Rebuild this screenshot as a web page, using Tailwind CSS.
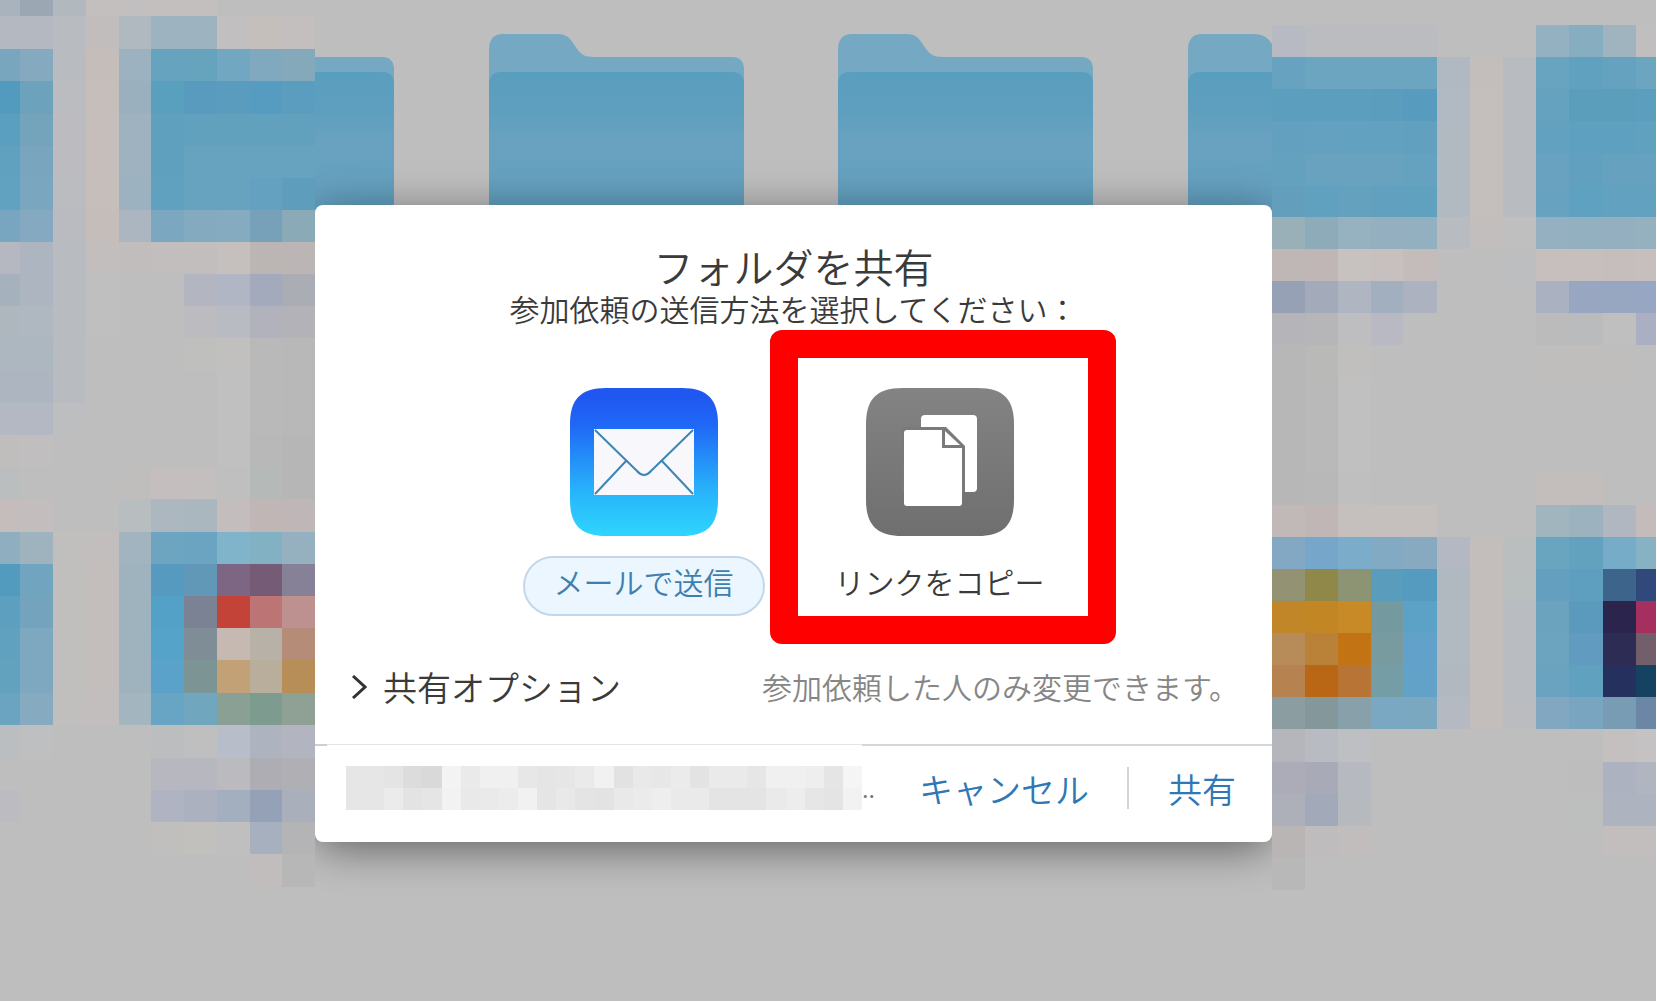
<!DOCTYPE html>
<html lang="ja">
  <head>
    <meta charset="UTF-8" />
    <meta name="viewport" content="width=device-width, initial-scale=1.0" />
    <title>フォルダを共有</title>
    <script src="https://cdn.jsdelivr.net/npm/@tailwindcss/browser@4"></script>
  </head>
  <body class="bg-white font-['Noto_Sans_CJK_JP',sans-serif] font-[350] text-[#3a3a3a]">
    <main
      class="grid min-h-screen grid-cols-[315fr_957fr_384fr] grid-rows-1 overflow-hidden border-r border-b border-white bg-[#bebebe]"
    >
      <!-- pixelated desktop, left -->
      <div class="relative z-10">
        <svg
          id="mosaicLeft"
          class="absolute inset-0 size-full"
          viewBox="0 0 315 1001"
          preserveAspectRatio="none"
          shape-rendering="crispEdges"
          aria-hidden="true"
        ></svg>
      </div>

      <div class="relative">
        <!-- folders behind the dialog -->
        <svg
          class="absolute inset-0 size-full"
          viewBox="0 0 957 1001"
          preserveAspectRatio="none"
          aria-hidden="true"
        >
          <defs>
            <linearGradient id="front" x1="0" y1="0" x2="0" y2="1">
              <stop offset="0" stop-color="#5a9ebe" />
              <stop offset="0.3" stop-color="#5f9fbe" />
              <stop offset="0.5" stop-color="#69a2c0" />
              <stop offset="1" stop-color="#64a1c0" />
            </linearGradient>
            <g id="folder">
              <path
                d="M0 210V50Q0 34 14 34H68C78 34 81 38 86 46C91 54 95 57 105 57H243Q255 57 255 70V210Z"
                fill="#74a8c3"
              />
              <path
                d="M0 210V84Q0 72 12 72H243Q255 72 255 84V210Z"
                fill="url(#front)"
              />
            </g>
          </defs>
          <use href="#folder" x="-176" />
          <use href="#folder" x="174" />
          <use href="#folder" x="523" />
          <use href="#folder" x="873" />
          <path d="M940 33H958V46Q952 34 940 34Z" fill="#bebebe" />
        </svg>

        <section
          role="dialog"
          aria-labelledby="title"
          class="relative mt-[205px] rounded-lg bg-white pt-[38px] shadow-[0_16px_40px_-8px_rgba(0,0,0,0.3),0_0_40px_rgba(0,0,0,0.25)]"
        >
          <h1 id="title" class="text-center text-[40px] leading-[46px]">フォルダを共有</h1>
          <p class="text-center text-[30px] leading-[38px]">
            参加依頼の送信方法を選択してください：
          </p>

          <div class="mt-[61px] flex justify-center pr-1 text-[30px]">
            <button type="button" class="flex w-[296px] flex-col items-center gap-5">
              <svg class="size-[148px]" viewBox="0 0 148 148" aria-hidden="true">
                <defs>
                  <linearGradient id="mail" x1="0" y1="0" x2="0" y2="1">
                    <stop offset="0.05" stop-color="#1f57f0" />
                    <stop offset="0.25" stop-color="#1f68f6" />
                    <stop offset="0.7" stop-color="#28b4fb" />
                    <stop offset="1" stop-color="#2ed5fe" />
                  </linearGradient>
                </defs>
                <path
                  d="M36 0H112C138 0 148 12 148 36V112C148 136 138 148 112 148H36C10 148 0 136 0 112V36C0 12 10 0 36 0Z"
                  fill="url(#mail)"
                />
                <path d="M24 41H124V107H24Z" fill="#f8f8fc" />
                <path
                  d="M25 42L67 83Q74 91 81 83L123 42M25 106L56 73M123 106L92 73"
                  fill="none"
                  stroke="#3c86b5"
                  stroke-width="2"
                />
              </svg>
              <span
                class="flex h-[60px] w-[242px] justify-center rounded-full border-2 border-[#c2d8ea] bg-[#ebf6fe] leading-[46px] text-[#3f7fb0]"
                >メールで送信</span
              >
            </button>

            <button type="button" class="relative flex w-[296px] flex-col items-center gap-5">
              <svg class="size-[148px]" viewBox="0 0 148 148" aria-hidden="true">
                <defs>
                  <linearGradient id="copy" x1="0" y1="0" x2="0" y2="1">
                    <stop offset="0" stop-color="#838383" />
                    <stop offset="1" stop-color="#6f6f6f" />
                  </linearGradient>
                </defs>
                <path
                  d="M36 0H112C138 0 148 12 148 36V112C148 136 138 148 112 148H36C10 148 0 136 0 112V36C0 12 10 0 36 0Z"
                  fill="url(#copy)"
                />
                <rect x="55" y="27" width="56" height="77" rx="4" fill="#fff" />
                <path d="M36 39H80L99 58V104H36Z" fill="#7a7a7a" />
                <path
                  d="M41 42H76V60H96V115Q96 118 93 118H41Q38 118 38 115V45Q38 42 41 42Z"
                  fill="#fff"
                />
                <path d="M79 43L94 57H79Z" fill="#fff" />
              </svg>
              <span class="h-[60px] leading-[50px]">リンクをコピー</span>
              <span
                class="pointer-events-none absolute -top-[58px] -right-7 -bottom-7 -left-[22px] rounded-xl border-[28px] border-[#fe0000]"
              ></span>
            </button>
          </div>

          <div class="mt-[46px] mb-[33px] flex h-[49px] items-center justify-between pr-[33px] pl-9">
            <button type="button" class="flex items-center gap-4 text-[34px]">
              <svg class="h-6 w-4" viewBox="0 0 16 24" fill="none" aria-hidden="true">
                <path d="M2 1L14 12L2 23" stroke="#333" stroke-width="3" />
              </svg>
              共有オプション
            </button>
            <p class="text-[30px] text-[#868686]">参加依頼した人のみ変更できます。</p>
          </div>

          <footer class="text-[34px] text-[#2f77b5]">
            <div class="flex h-0.5">
              <span class="w-3 bg-[#cfcfcf]"></span>
              <span class="h-px w-[535px] bg-[#e4e4e4]"></span>
              <span class="flex-1 bg-[#d6d6d6]"></span>
            </div>
            <div class="flex h-24 items-center pr-9 pb-3 pl-[31px]">
              <svg
                id="mosaicName"
                class="h-11 w-[516px]"
                viewBox="0 0 513 44"
                preserveAspectRatio="none"
                shape-rendering="crispEdges"
                aria-hidden="true"
              ></svg>
              <span class="text-[24px] text-[#777]">..</span>
              <button type="button" class="ml-auto">キャンセル</button>
              <span class="mr-[39px] ml-[38px] h-[42px] w-0.5 bg-[#d4d4d4]"></span>
              <button type="button">共有</button>
            </div>
          </footer>
        </section>
      </div>

      <!-- pixelated desktop, right -->
      <div class="relative z-10">
        <svg
          id="mosaicRight"
          class="absolute inset-0 size-full"
          viewBox="0 0 384 1001"
          preserveAspectRatio="none"
          shape-rendering="crispEdges"
          aria-hidden="true"
        ></svg>
      </div>
    </main>

    <script>
      // Each row: "top bottom colours..."
      function paint(id, cols, rows) {
        let out = "";
        rows.forEach((row) => {
          const [top, bottom, ...cells] = row.split(" ");
          cells.forEach((c, i) => {
            out += `<rect x="${cols[i]}" y="${top}" width="${cols[i + 1] - cols[i]}" height="${bottom - top}" fill="#${c}"/>`;
          });
        });
        document.getElementById(id).innerHTML = out;
      }

      paint("mosaicLeft", [0, 20, 53, 86, 119, 151, 184, 217, 250, 282, 315], [
        "0 1001 bebebe bebebe bebebe bebebe bebebe bebebe bebebe bebebe bebebe bebebe",
        "0 16 a9b3bd 9ba8b4 b2b9be c2bfbe c1bfbf c3bfbe c3bfbe bebebe bebebe bebebe",
        "16 49 b3b8c1 b3b8c1 b8bcc0 c1bdbc b0b9c0 9db3c0 9db3c0 c1bfc0 c5bfbc c4bfbf",
        "49 81 78a6be 85aabf b8bbc0 c5bdb9 9db2c0 66a3bf 66a4be 72a7c2 80a9bf 83a9ba",
        "81 114 529bbf 6da2bd bbbcc0 c6beba 9ab0bf 599fbe 599bbe 5a9cbe 569bc0 5a9dbf",
        "114 146 5b9fc0 74a4bc bcbcc0 c6beba 9eb2c0 5ea0be 61a1be 61a1be 61a1be 61a1be",
        "146 178 60a1c0 79a5be bcbcc0 c6beba 9eb2c0 5ea0be 67a2bf 67a2bf 67a2bf 67a2bf",
        "178 210 61a2c0 7ba6c0 bbbcc0 c6beba 9cb2c0 5fa1be 67a2bf 67a2bf 64a0bf 5f9dbc",
        "210 242 78a5c0 85a9c0 b9bbc0 c4bdba abb6c0 7ba7c0 84aac0 85abc0 76a1b9 8aaab8",
        "242 274 b5b8c0 adb6c0 b8bbc0 c1bebd c1bdbc c2bebd c2bebd c5c0be bbb6b4 bcb5b5",
        "274 306 a5b2bd adb6c0 b8bbc0 bfbfbf bebebe bebebe b3b6c0 b0b6c3 a3aabb aaadb4",
        "306 338 aeb6be afb7c0 b8bbc0 bfbfbf bebebe bebebe bbbbc0 b9bbc3 b1b2bc b2b2b8",
        "338 371 adb7c0 adb7c0 b8bbc0 bebebe bebebe bebebe bfbfbe c1c0be b9b9b9 b8b8b8",
        "371 403 adb5c0 adb5c0 b8bbc0 bebebe bebebe bebebe bebebe c0c0c0 b9b9b9 b8b8b8",
        "403 435 b3b8c3 b3b8c3 bdbebf bebebe bebebe bebebe bebebe c0c0c0 b9b9b9 b8b8b8",
        "435 467 c0bdbd c0bebe bebebe bebebe bebebe bebebe bebebe c0c0c0 b8b8b8 b6b6b6",
        "467 499 bbbebe bebebe bebebe bebebe c0bebd c4bfbe c3bfbe bfbfbf b5b9b7 b6b6b6",
        "499 532 c4bdbc c3bebd bebebe bfbebe b8bdbf acb7bf abb7bf c3bebd c0b6b5 bfb7b7",
        "532 564 8fafc0 9fb3be c1bebe c2bebd a1b4bf 6da5c0 6ba4c0 80b4cb 82b1c4 95b0be",
        "564 596 539bbe 70a4bf c1bebe c3bdbc 9fb3be 569bbf 6198b8 7c6683 765b77 868196",
        "596 628 5c9fbe 74a4bd c1bebe c3bdbc 9fb3be 53a1c7 7b8294 c34338 bd7474 bd9190",
        "628 660 5fa1bf 7da8bf c1bebe c3bdbc 9fb3be 55a3c9 7f8e96 c6b9b1 b8b1a8 b58c78",
        "660 693 62a2bf 7da8bf c1bebe c3bdbc 9fb3be 5ba2ca 7c9494 c3a176 b8ae9b b78e58",
        "693 725 6ba4c0 86aac0 c1bebe c2bebd a3b5bf 68a5c4 71a6bf 8aa095 7e9b90 8fa195",
        "725 758 babec0 bdbfc0 bebebe bebebe bebebe bcbdbe bebfbe b7bdc9 aeb4bf b2b5c0",
        "758 790 bfbebe bebebe bebebe bebebe bebebe b7b7bf b7b7c0 bbbbbf adadb3 b0b0b4",
        "790 822 bbbbc1 bebebe bebebe bebebe bebebe b0b3c1 abb1bf a3aebf 95a1b7 a9afbb",
        "822 854 bebebe bebebe bebebe bebebe bebebe c0bfbe c1c0bd bfbfbf a7b0bf b4b4b7",
        "854 887 bebebe bebebe bebebe bebebe bebebe bebebe bebebe bebebe c0bdbc b7b7b7",
      ]);

      paint("mosaicRight", [0, 33, 66, 99, 131, 165, 198, 231, 264, 297, 331, 364, 384], [
        "0 1001 bebebe bebebe bebebe bebebe bebebe bebebe bebebe bebebe bebebe bebebe bebebe bebebe",
        "25 57 b7bac3 babcc0 babcc0 babcc0 babcc0 bebebe bebebe bfbebe 93b1c0 87adc0 a0b4c0 c0bebe",
        "57 89 67a3c0 6ca5c0 6ca5c0 6ca5c0 6ca5c0 b0b8c2 c3bdbc b8bcc0 68a3bf 60a1bf 65a2bf 6ca5c0",
        "89 121 5c9ebd 5c9ebd 5c9ebd 5a9dbd 579bbe b1bac2 c4bebd b8bcc0 65a2c0 5a9ebc 5a9ebc 5b9ebe",
        "121 154 639fbf 64a0bf 62a1bf 62a1bf 61a1bf b1bac0 c4bebd b8bcc0 62a2c0 5ea0c0 5ea0c0 60a1c0",
        "154 186 63a1be 69a2bf 69a2bf 69a2bf 65a2c0 b1bac0 c4bebd b8bcc0 68a2c0 62a0c0 66a2c0 66a2c0",
        "186 217 639fbd 60a1bf 64a1bf 61a1bf 60a1bf b1bac0 c4bebd b8bcc0 67a2c0 5fa1c0 62a1c0 62a1c0",
        "217 249 99b0b9 8dabb9 96b1c0 94b0c0 93b0c0 b8bcc0 c1bebd bfbfbf 95b0c0 93b0c0 94b0c0 95b1c0",
        "249 281 bfb7b6 bfb6b5 c7c2c0 c7c0be c4bcba bebebe bebebe bdbebf c6bfbd c6bfbd c6bebc c7bfbd",
        "281 313 97a1b6 a3aaba b0b6c1 a2afbe acb2c0 bfbebe bebebe bebebe aab1c1 98a6c1 97a6c1 97a7c3",
        "313 345 b5b5b9 b6b6b9 bebec0 b9b9c3 bebebf bebebe bebebe bebebe bbbbbb b9bbbc bebfbe aab0c2",
        "345 377 b7b7b7 b9b9b7 c0bfbe bebebe bebebe bebebe bebebe bebebe bfbebc bfbebc bfbebc bebebe",
        "377 473 b7b7b7 b9b9b9 c0c0c0 bebebe bebebe bebebe bebebe bebebe bebebe bebebe bebebe bebebe",
        "473 505 b7b7b7 b8b8b8 bfbfbf bebebe bebebe bebebe bebebe bebebe c3bdbc c3bdbc bebebe bebebe",
        "505 537 c0b9b8 bfb6b5 c5bfbe c5bfbe c5bfbe bebebe bebebe bfbebe a1b5bf 9cb3bf b1b7c1 c3bcba",
        "537 569 83a8c3 76a7cb 7badca 82abc3 87aac0 b3b8c2 c3bdbc bbbebf 6aa5c0 62a2bf 76acc7 86b2c4",
        "569 601 939272 908849 8c9473 5a9cbb 559bc0 b0b8c0 c3bdbc b9bebf 659fbf 5e9fc0 3d658c 30497a",
        "601 633 c08628 c38625 c78a26 749a9f 5ca1c6 b1bac0 c3bdbc b9bcc0 6ba3bf 5c9abd 2b254d a5305f",
        "633 665 b88c58 ba8239 c27415 789b9f 62a2ca b1bac0 c3bdbc b9bcc0 6ca4c0 629bc0 2c2c55 725f69",
        "665 697 b68250 b96715 b87434 759da6 62a1c8 b1b8c0 c3bdbc b9bcc0 69a3bf 60a1bf 25305e 154260",
        "697 729 8b9da0 84979a 88a0aa 7aa7c1 7ba8c1 b5b9c1 c3bdbc bbbcc0 81a8c0 79a5c0 799cb5 6c86a6",
        "729 762 b5b6bc b8bbc1 bebfc2 bebebe bebebe bebebe bebebe bebebe bebebe bebebe c3c0bf c4c2c2",
        "762 794 abacb8 a9aab8 b7b9c0 bebebe bebebe bebebe bebebe bebebe bebebe bdbdbe adb2c0 b1b5c0",
        "794 826 adb0b9 a2aaba b6babf bebebe bebebe bebebe bebebe bebebe bebebe bdbfbf aeb3c0 adb4c0",
        "826 858 b8b5b4 bebcbc c0bdbc bebebe bebebe bebebe bebebe bebebe bebebe bebebe c2bebe c2bebe",
        "858 890 b8b8b8",
      ]);

      paint("mosaicName", Array.from({ length: 28 }, (_, i) => i * 19), [
        "0 22 e6e6e6 e6e6e6 e4e4e4 dcdcdc d9d9d9 f3f3f3 eaeaea f0f0f0 f0f0f0 e7e7e7 e5e5e5 e6e6e6 eaeaea f1f1f1 e2e2e2 e9e9e9 e7e7e7 ebebeb e3e3e3 eaeaea eaeaea e6e6e6 f0f0f0 f0f0f0 eeeeee e5e5e5 f5f5f5",
        "22 44 e6e6e6 e6e6e6 ebebeb e3e3e3 e5e5e5 f2f2f2 e9e9e9 eaeaea ececec f1f1f1 e5e5e5 e9e9e9 e4e4e4 e3e3e3 e9e9e9 ebebeb eeeeee eaeaea eaeaea e4e4e4 e4e4e4 e4e4e4 eaeaea ededed e6e6e6 e4e4e4 f2f2f2",
      ]);
    </script>
  </body>
</html>
